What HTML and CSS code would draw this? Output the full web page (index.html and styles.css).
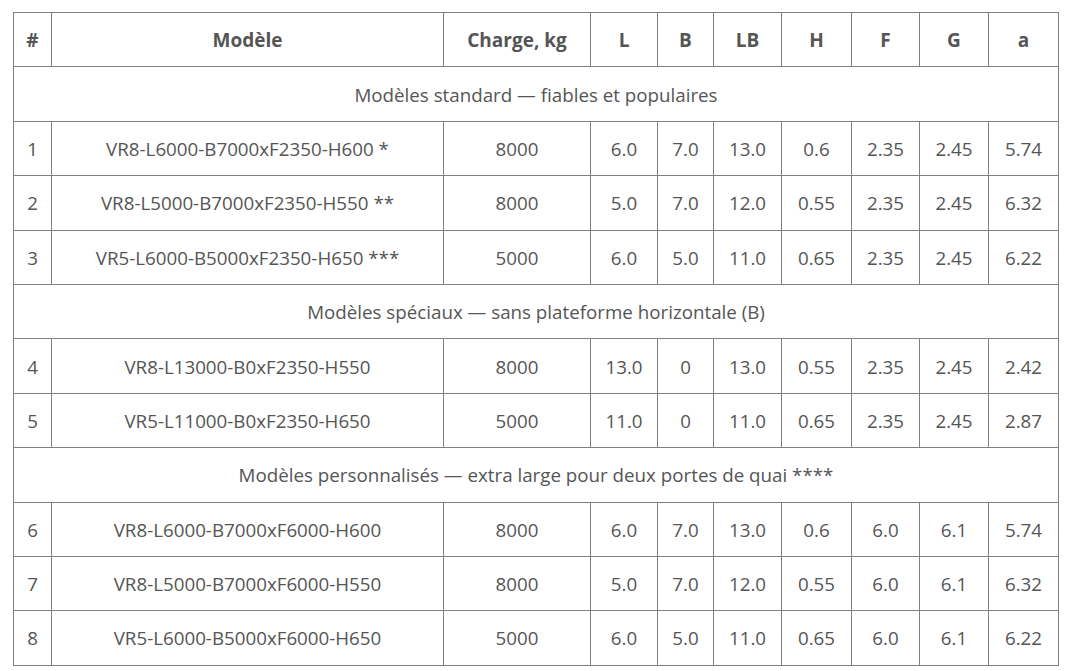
FILE: index.html
```html
<!DOCTYPE html>
<html lang="fr">
<head>
<meta charset="utf-8">
<link rel="stylesheet" href="styles.css">
</head>
<body>
<table class="spec">
  <colgroup>
    <col class="c-num"><col class="c-model"><col class="c-load"><col class="c-l"><col class="c-b"><col class="c-lb"><col class="c-h"><col class="c-f"><col class="c-g"><col class="c-a">
  </colgroup>
  <thead>
    <tr><th>#</th><th>Modèle</th><th>Charge, kg</th><th>L</th><th>B</th><th>LB</th><th>H</th><th>F</th><th>G</th><th>a</th></tr>
  </thead>
  <tbody>
    <tr class="section"><td colspan="10">Modèles standard — fiables et populaires</td></tr>
    <tr><td>1</td><td>VR8-L6000-B7000xF2350-H600 *</td><td>8000</td><td>6.0</td><td>7.0</td><td>13.0</td><td>0.6</td><td>2.35</td><td>2.45</td><td>5.74</td></tr>
    <tr><td>2</td><td>VR8-L5000-B7000xF2350-H550 **</td><td>8000</td><td>5.0</td><td>7.0</td><td>12.0</td><td>0.55</td><td>2.35</td><td>2.45</td><td>6.32</td></tr>
    <tr><td>3</td><td>VR5-L6000-B5000xF2350-H650 ***</td><td>5000</td><td>6.0</td><td>5.0</td><td>11.0</td><td>0.65</td><td>2.35</td><td>2.45</td><td>6.22</td></tr>
    <tr class="section"><td colspan="10">Modèles spéciaux — sans plateforme horizontale (B)</td></tr>
    <tr><td>4</td><td>VR8-L13000-B0xF2350-H550</td><td>8000</td><td>13.0</td><td>0</td><td>13.0</td><td>0.55</td><td>2.35</td><td>2.45</td><td>2.42</td></tr>
    <tr><td>5</td><td>VR5-L11000-B0xF2350-H650</td><td>5000</td><td>11.0</td><td>0</td><td>11.0</td><td>0.65</td><td>2.35</td><td>2.45</td><td>2.87</td></tr>
    <tr class="section"><td colspan="10">Modèles personnalisés — extra large pour deux portes de quai ****</td></tr>
    <tr><td>6</td><td>VR8-L6000-B7000xF6000-H600</td><td>8000</td><td>6.0</td><td>7.0</td><td>13.0</td><td>0.6</td><td>6.0</td><td>6.1</td><td>5.74</td></tr>
    <tr><td>7</td><td>VR8-L5000-B7000xF6000-H550</td><td>8000</td><td>5.0</td><td>7.0</td><td>12.0</td><td>0.55</td><td>6.0</td><td>6.1</td><td>6.32</td></tr>
    <tr><td>8</td><td>VR5-L6000-B5000xF6000-H650</td><td>5000</td><td>6.0</td><td>5.0</td><td>11.0</td><td>0.65</td><td>6.0</td><td>6.1</td><td>6.22</td></tr>
  </tbody>
</table>
</body>
</html>
```
FILE: styles.css
```css
html, body {
  margin: 0;
  padding: 0;
  background: #ffffff;
}
body {
  padding: 12px 0 0 13px;
  font-family: "Open Sans", "Liberation Sans", sans-serif;
  color: #555555;
}
.spec {
  border-collapse: collapse;
  table-layout: fixed;
  width: 1046px;
  font-size: 18.75px;
}
.c-num { width: 38px; }
.c-model { width: 392px; }
.c-load { width: 147px; }
.c-l { width: 67px; }
.c-b { width: 56px; }
.c-lb { width: 68px; }
.c-h { width: 70px; }
.c-f { width: 68px; }
.c-g { width: 69px; }
.c-a { width: 70px; }
.spec th,
.spec td {
  border: 1px solid #808080;
  text-align: center;
  vertical-align: middle;
  height: 54.4px;
  padding: 0;
  box-sizing: border-box;
}
.spec th {
  font-weight: 700;
  font-size: 19px;
}
.spec td {
  font-weight: 400;
}
```
